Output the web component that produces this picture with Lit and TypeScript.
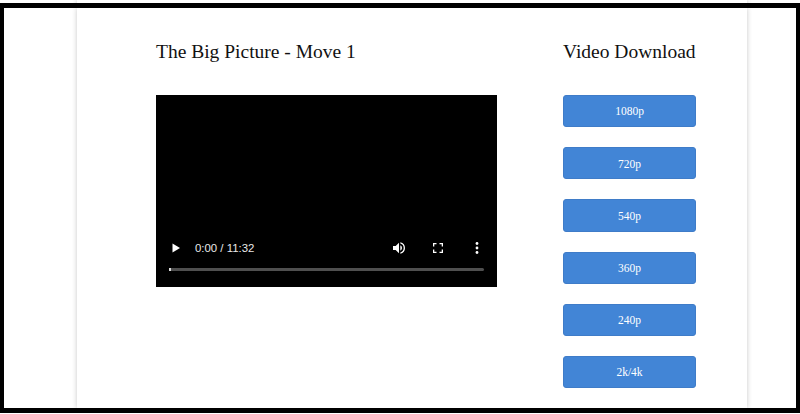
import { LitElement, html, css } from "lit";
import { customElement } from "lit/decorators.js";

@customElement("app-root")
export class AppRoot extends LitElement {
  static styles = css`
    :host {
      display: block;
      width: 800px;
      height: 414px;
      overflow: hidden;
      background: #fff;
      font-family: "Liberation Serif", "Times New Roman", serif;
    }
    .strip {
      height: 3px;
      overflow: hidden;
      padding-left: 77px;
    }
    .strip div {
      width: 670px;
      height: 20px;
      box-shadow: 0 0 5px rgba(0, 0, 0, 0.22);
    }
    .frame {
      box-sizing: border-box;
      width: 800px;
      height: 410px;
      border: solid #000;
      border-width: 5px 4px;
      background: #fff;
      overflow: hidden;
    }
    .sheet {
      box-sizing: border-box;
      width: 670px;
      height: 100%;
      margin-left: 73px;
      background: #fff;
      box-shadow: 0 0 5px rgba(0, 0, 0, 0.22);
      padding: 32px 51px 0 79px;
      display: flex;
      justify-content: space-between;
    }
    h2 {
      margin: 0;
      font-weight: 400;
      font-size: 19.5px;
      line-height: 24px;
      color: #111;
    }
    .main h2 { margin-bottom: 31px; }
    .side { width: 133px; }
    .side h2 { margin-bottom: 31px; white-space: nowrap; }
    .player {
      position: relative;
      width: 341px;
      height: 192px;
      background: #000;
      display: flex;
      flex-direction: column;
      justify-content: flex-end;
      padding: 0 13px 16px;
      box-sizing: border-box;
      color: #e8e8e8;
    }
    .controls {
      display: flex;
      align-items: center;
      height: 20px;
      margin-bottom: 10px;
    }
    .time {
      font-family: "Liberation Sans", Arial, sans-serif;
      font-size: 11.4px;
      margin-left: 13px;
      flex: 1;
    }
    .controls svg { display: block; fill: #fff; flex: none; }
    .play { margin-left: 1px; }
    .vol { margin-right: 24px; }
    .full { margin-right: 30px; }
    .more { margin-right: 5px; }
    .track {
      height: 3px;
      border-radius: 2px;
      background: #4f4f4f;
      position: relative;
    }
    .track::before {
      content: "";
      position: absolute;
      left: 0;
      top: 0;
      width: 2px;
      height: 3px;
      background: #ddd;
    }
    .btns { display: flex; flex-direction: column; gap: 20px; }
    .btn {
      box-sizing: border-box;
      width: 133px;
      height: 32.2px;
      padding-top: 0.5px;
      border-radius: 3px;
      background: #4285d6;
      border: 1px solid #3f7cc8;
      color: #fff;
      font-size: 11.5px;
      font-family: inherit;
      display: flex;
      align-items: center;
      justify-content: center;
    }
  `;

  render() {
    const res = ["1080p", "720p", "540p", "360p", "240p", "2k/4k"];
    return html`
      <div class="strip"><div></div></div>
      <div class="frame">
        <div class="sheet">
          <div class="main">
            <h2>The Big Picture - Move 1</h2>
            <div class="player">
              <div class="controls">
                <svg class="play" width="12" height="12" viewBox="0 0 12 12"><path d="M2.5 1.500v9l7.500-4.500z" /></svg>
                <span class="time">0:00 / 11:32</span>
                <svg class="vol" width="16" height="16" viewBox="0 0 24 24"><path d="M3 9v6h4l5 5V4L7 9H3zm13.500 3A4.500 4.500 0 0 0 14 7.970v8.050A4.470 4.470 0 0 0 16.500 12zM14 3.230v2.060a7 7 0 0 1 0 13.420v2.060a9 9 0 0 0 0-17.540z" /></svg>
                <svg class="full" width="14" height="14" viewBox="0 0 14 14"><path d="M2 2h3.500v1.300H3.300v2.200H2zM8.500 2H12v3.500h-1.300V3.300H8.500zM2 8.500h1.300v2.200h2.200V12H2zM10.700 8.500H12V12H8.500v-1.300h2.200z" /></svg>
                <svg class="more" width="4" height="14" viewBox="0 0 4 14"><circle cx="2" cy="2.500" r="1.400" /><circle cx="2" cy="7" r="1.400" /><circle cx="2" cy="11.500" r="1.400" /></svg>
              </div>
              <div class="track"></div>
            </div>
          </div>
          <div class="side">
            <h2>Video Download</h2>
            <div class="btns">
              ${res.map((r) => html`<div class="btn">${r}</div>`)}
            </div>
          </div>
        </div>
      </div>
    `;
  }
}
